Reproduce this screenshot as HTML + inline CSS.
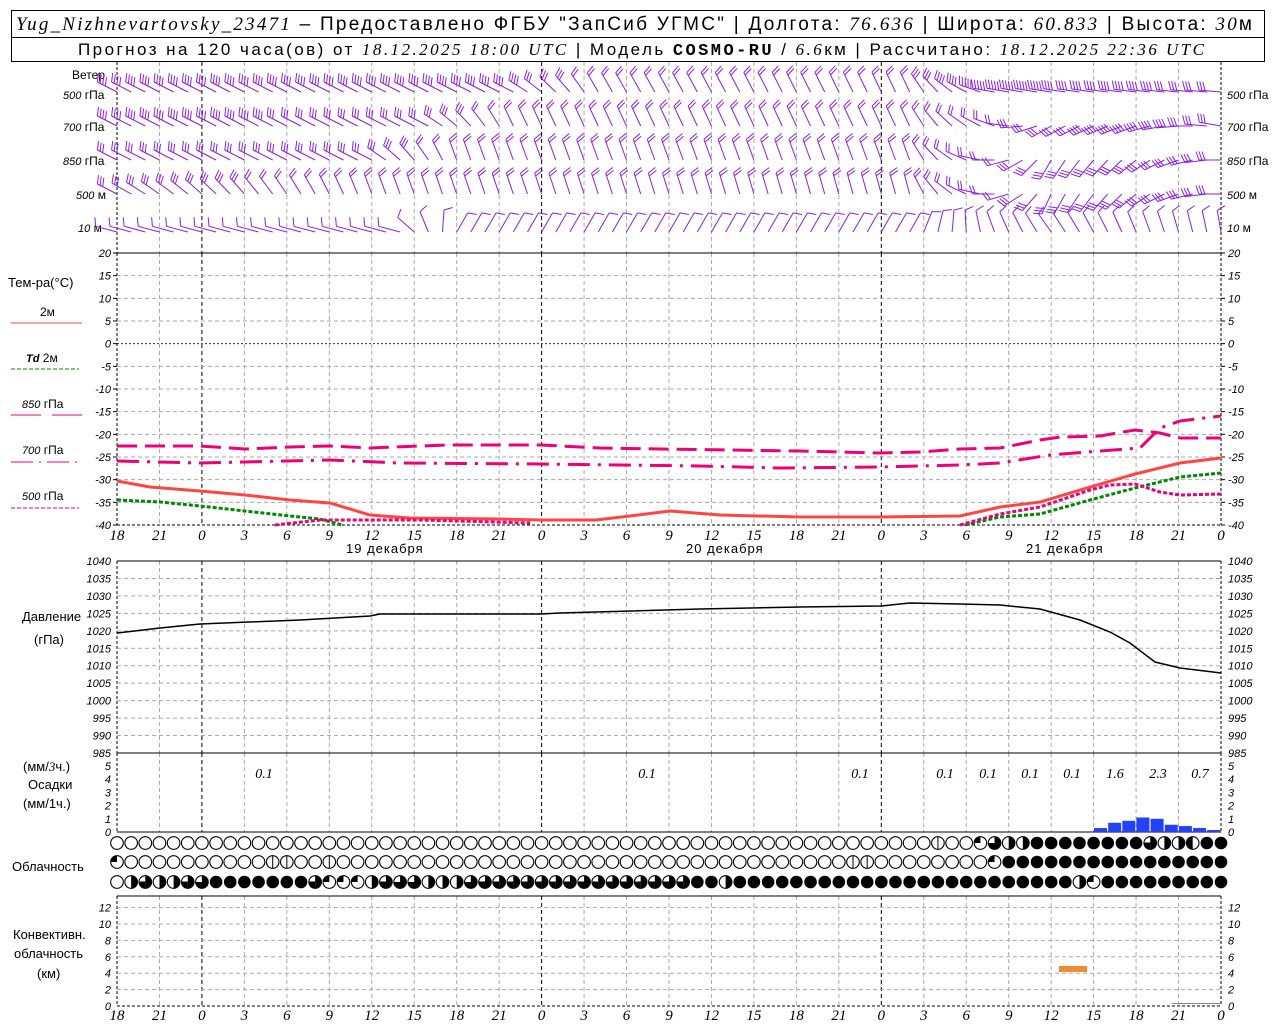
<!DOCTYPE html>
<html><head><meta charset="utf-8"><style>
html,body{margin:0;padding:0;background:#fff;width:1280px;height:1024px;overflow:hidden}
svg{display:block}
text{font-family:"Liberation Sans","DejaVu Sans",sans-serif;fill:#000}
.i{font-family:"Liberation Serif",serif;font-style:italic}
.t{font-size:11px;font-style:italic;font-family:"Liberation Sans",sans-serif}
</style></head><body>
<svg id="s" width="1280" height="1024" xmlns="http://www.w3.org/2000/svg">
<rect x="11.5" y="10.5" width="1253" height="51" fill="none" stroke="#000"/>
<line x1="11" y1="37.5" x2="1265" y2="37.5" stroke="#000"/>
<text x="16" y="30" font-size="19" textLength="1236" lengthAdjust="spacing"><tspan class="i">Yug_Nizhnevartovsky_23471</tspan> – Предоставлено ФГБУ "ЗапСиб УГМС" | Долгота: <tspan class="i">76.636</tspan> | Широта: <tspan class="i">60.833</tspan> | Высота: <tspan class="i">30</tspan>м</text>
<text x="78" y="55" font-size="17" textLength="1126" lengthAdjust="spacing">Прогноз на 120 часа(ов) от <tspan class="i">18.12.2025 18:00 UTC</tspan> | Модель <tspan font-family="Liberation Mono" font-weight="bold">COSMO-RU</tspan> / <tspan class="i">6.6</tspan>км | Рассчитано: <tspan class="i">18.12.2025 22:36 UTC</tspan></text>
<g font-size="12">
<text x="72" y="79">Ветер</text>
<text x="63" y="99"><tspan class="t">500</tspan> гПа</text>
<text x="63" y="131"><tspan class="t">700</tspan> гПа</text>
<text x="63" y="165"><tspan class="t">850</tspan> гПа</text>
<text x="76" y="199"><tspan class="t">500</tspan> м</text>
<text x="78" y="232"><tspan class="t">10</tspan>  м</text>
<text x="1227" y="99"><tspan class="t">500</tspan> гПа</text>
<text x="1227" y="131"><tspan class="t">700</tspan> гПа</text>
<text x="1227" y="165"><tspan class="t">850</tspan> гПа</text>
<text x="1227" y="199"><tspan class="t">500</tspan> м</text>
<text x="1227" y="232"><tspan class="t">10</tspan>  м</text>
<text x="8" y="287" font-size="13">Тем-ра(°C)</text>
<text x="40" y="316">2м</text>
<line x1="11" y1="323" x2="82" y2="323" stroke="#f44" />
<text x="26" y="362"><tspan class="t" font-weight="bold">Td</tspan>  2м</text>
<line x1="11" y1="369" x2="79" y2="369" stroke="#080" stroke-dasharray="4,2"/>
<text x="22" y="408"><tspan class="t">850</tspan> гПа</text>
<line x1="11" y1="415" x2="41" y2="415" stroke="#e07"/><line x1="52" y1="415" x2="82" y2="415" stroke="#e07"/>
<text x="22" y="454"><tspan class="t">700</tspan> гПа</text>
<line x1="11" y1="462" x2="79" y2="462" stroke="#e07" stroke-dasharray="22,6,2,6"/>
<text x="22" y="500"><tspan class="t">500</tspan> гПа</text>
<line x1="11" y1="508" x2="79" y2="508" stroke="#e07" stroke-dasharray="4,2"/>
<text x="22" y="621" font-size="13">Давление</text>
<text x="34" y="644" font-size="13">(гПа)</text>
<text x="23" y="771" font-size="13">(мм/<tspan class="i">3</tspan>ч.)</text>
<text x="28" y="789" font-size="13">Осадки</text>
<text x="23" y="808" font-size="13">(мм/1ч.)</text>
<text x="12" y="871" font-size="13">Облачность</text>
<text x="13" y="939" font-size="13">Конвективн.</text>
<text x="14" y="958" font-size="13">облачность</text>
<text x="37" y="978" font-size="13">(км)</text>
<text x="346" y="553" font-size="13" letter-spacing="1">19 декабря</text>
<text x="686" y="553" font-size="13" letter-spacing="1">20 декабря</text>
<text x="1026" y="553" font-size="13" letter-spacing="1">21 декабря</text>
</g>
<g id="g"></g>
</svg>
<script>
var g=document.getElementById('g'),h='';
var X0=117,X1=1221,dx=(X1-X0)/26,ph=(X1-X0)/78;
function L(a,b,c,d,st,w,da){h+='<line x1="'+a+'" y1="'+b+'" x2="'+c+'" y2="'+d+'" stroke="'+st+'" stroke-width="'+(w||1)+'"'+(da?' stroke-dasharray="'+da+'"':'')+'/>';}
function T(x,y,s,cls,anc){h+='<text x="'+x+'" y="'+y+'" class="'+(cls||'t')+'"'+(anc?' text-anchor="'+anc+'"':'')+'>'+s+'</text>';}
function P(pts,st,w,da){h+='<polyline fill="none" points="'+pts.join(' ')+'" stroke="'+st+'" stroke-width="'+w+'"'+(da?' stroke-dasharray="'+da+'"':'')+'/>';}
var panels=[[62,253],[253,525],[561,753],[753,832],[896,1006]];
panels.forEach(function(p,k){
 for(var i=1;i<26;i++){var x=X0+i*dx;var day=(i==2||i==10||i==18);L(x,p[0],x,p[1],day?'#000':'#aaa',1,'4,3');}
 L(X0,p[0],X0,p[1],'#000',1,'3,2');L(X1,p[0],X1,p[1],'#000',1,'3,2');
});
L(X0,253,X1,253,'#000',1);L(X0,561,X1,561,'#000',1);L(X0,753,X1,753,'#000',1);L(X0,832,X1,832,'#000',1);L(X0,896,X1,896,'#000',1);
for(var v=20;v>=-40;v-=5){var y=253+(20-v)*272/60;if(v<20&&v>-40)L(X0,y,X1,y,v==0?'#22f':'#aaa',1,v==0?'2,2':'4,3');T(111,y+4,v,'t','end');T(1228,y+4,v);L(113,y,117,y,'#000');L(1221,y,1225,y,'#000');}
L(X0,525,X1,525,'#000',1,'3,2');
for(var v=1040;v>=985;v-=5){var y=561+(1040-v)*192/55;if(v<1040&&v>985)L(X0,y,X1,y,'#aaa',1,'4,3');T(111,y+4,v,'t','end');T(1228,y+4,v);}
for(var v=0;v<=5;v++){var y=832-v*13.2;T(111,y+4,v,'t','end');T(1228,y+4,v);}
for(var v=0;v<=12;v+=2){var y=1006-v*8.2;if(v>0)L(X0,y,X1,y,'#aaa',1,'4,3');T(111,y+4,v,'t','end');T(1228,y+4,v);}
L(X0,1006,X1,1006,'#000',1,'3,2');
var lab=[18,21,0,3,6,9,12,15,18,21,0,3,6,9,12,15,18,21,0,3,6,9,12,15,18,21,0];
lab.forEach(function(s,i){var x=X0+i*dx;h+='<text x="'+x+'" y="540" text-anchor="middle" class="i" font-size="15">'+s+'</text><text x="'+x+'" y="1020" text-anchor="middle" class="i" font-size="15">'+s+'</text>';});
P(['117,481','150,487','200,491','245,495','290,500','330,503','370,515','410,518','500,519','541,520','596,520','630,516','670,511','720,515','800,517','881,517','960,516','1000,507','1040,502','1090,487','1135,474','1180,463','1221,458'],'#f44',3);
P(['117,500','160,502','200,506','245,511','290,516','320,519','342,525'],'#080',3,'4,2');
P(['965,525','1000,517','1040,514','1090,500','1135,488','1180,477','1221,473'],'#080',3,'4,2');
P(['117,446','200,446','245,449','290,447','330,446','370,448','420,446','450,445','541,445','600,448','660,449','800,451','880,453','920,452','960,449','1000,448','1040,440','1060,437','1100,436','1135,430','1160,433','1180,438','1221,438'],'#e07',3,'20,8');
P(['117,461','200,463','330,460','400,463','541,464','700,466','780,468','880,467','960,465','1000,463','1050,455','1100,451','1140,448','1160,428','1180,421','1221,416'],'#e07',3,'22,8,3,8');
P(['275,525','320,520','420,520','530,523'],'#e07',3,'4,2');
P(['960,525','1000,514','1040,507','1090,490','1110,485','1135,484','1160,492','1180,495','1221,494'],'#e07',3,'4,2');
P(['117,633','160,628','200,624','300,620','370,616','380,614','541,614','560,613','700,609','800,607','881,606','910,603','960,604','1000,605','1040,609','1080,620','1110,632','1130,643','1155,662','1180,668','1221,673'],'#000',1.5);
[[264,'0.1'],[647,'0.1'],[860,'0.1'],[945,'0.1'],[988,'0.1'],[1030,'0.1'],[1072,'0.1'],[1115,'1.6'],[1158,'2.3'],[1200,'0.7']].forEach(function(a){h+='<text x="'+a[0]+'" y="778" text-anchor="middle" class="i" font-size="14">'+a[1]+'</text>';});
[0.3,0.7,0.85,1.1,1.0,0.55,0.45,0.3,0.15].forEach(function(v,i){var x=1094+i*14.15;h+='<rect x="'+x+'" y="'+(832-v*13.2)+'" width="13" height="'+(v*13.2)+'" fill="#2442f5"/>';});
h+='<rect x="1172" y="1003" width="50" height="1" fill="#888"/>';
h+='<rect x="1059" y="966" width="28" height="6" fill="#f08c30"/>';
function rowArr(def,sp){var a=[];for(var i=0;i<79;i++)a.push(def);for(var k in sp)a[k]=sp[k];return a;}
var r1=rowArr('o',{58:'v',61:'q',62:'3',63:'R',64:'R',73:'h',74:'R',75:'R',76:'L'});for(var i=65;i<79;i++)if(!r1[i]||r1[i]=='o')r1[i]='f';
var r2=rowArr('o',{0:'q',11:'v',12:'v',15:'v',52:'v',53:'v',62:'q'});for(var i=63;i<79;i++)r2[i]='f';
var r3=rowArr('h',{0:'o',1:'R',2:'h',3:'R',4:'R',5:'h',6:'3',14:'h',15:'q',16:'q',17:'q',18:'R',19:'h',20:'3',21:'3',22:'R',23:'R',24:'R',25:'3'});
for(var i=7;i<14;i++)r3[i]='f';for(var i=41;i<79;i++)r3[i]='f';r3[43]='R';r3[68]='R';r3[69]='q';
function circ(cx,cy,t){var r=6.3;
 if(t=='f'){h+='<circle cx="'+cx+'" cy="'+cy+'" r="'+r+'" fill="#000"/>';return;}
 h+='<circle cx="'+cx+'" cy="'+cy+'" r="'+r+'" fill="#fff" stroke="#000" stroke-width="1.1"/>';
 if(t=='v')L(cx,cy-r,cx,cy+r,'#000');
 if(t=='R'||t=='h')h+='<path d="M'+cx+' '+(cy-r)+'A'+r+' '+r+' 0 0 1 '+cx+' '+(cy+r)+'Z" fill="#000"/>';
 if(t=='L')h+='<path d="M'+cx+' '+(cy-r)+'A'+r+' '+r+' 0 0 0 '+cx+' '+(cy+r)+'Z" fill="#000"/>';
 if(t=='h'){L(cx-r,cy,cx,cy,'#000');h+='<path d="M'+cx+' '+cy+'L'+(cx-r)+' '+cy+'A'+r+' '+r+' 0 0 0 '+cx+' '+(cy+r)+'Z" fill="#000"/>';}
 if(t=='q')h+='<path d="M'+cx+' '+cy+'L'+cx+' '+(cy-r)+'A'+r+' '+r+' 0 0 0 '+(cx-r)+' '+cy+'Z" fill="#000"/>';
 if(t=='3')h+='<path d="M'+cx+' '+cy+'L'+cx+' '+(cy-r)+'A'+r+' '+r+' 0 1 1 '+(cx-r)+' '+cy+'Z" fill="#000"/>';
}
[[r1,843],[r2,862],[r3,882]].forEach(function(rw){for(var i=0;i<79;i++)circ(X0+i*ph,rw[1],rw[0][i]);});
var lv=[[92,[[0,207,4],[28,207,4],[34,240,2],[56,245,2],[62,190,5],[78,185,3]]],
[126,[[0,207,4],[22,207,3],[28,245,2],[56,245,2],[62,200,2],[66,150,3],[72,160,4],[78,190,3]]],
[160,[[0,207,3],[18,207,3],[24,250,2],[56,250,2],[62,180,2],[66,120,3],[72,140,3],[78,180,3]]],
[194,[[0,207,3],[18,250,2],[56,255,2],[62,180,2],[66,115,3],[72,140,3],[78,180,3]]],
[232,[[0,195,1],[20,195,1],[24,300,1],[56,300,1],[62,250,1],[66,235,1],[78,260,1]]]];
var ws='';
lv.forEach(function(l){var y0=l[0],k=l[1];
 for(var i=0;i<79;i++){var j=0;while(j<k.length-2&&k[j+1][0]<=i)j++;var A=k[j],B=k[j+1];var f=Math.min(1,Math.max(0,(i-A[0])/(B[0]-A[0])));
  var a=(A[1]+(B[1]-A[1])*f)*Math.PI/180,n=Math.round(A[2]+(B[2]-A[2])*f);
  var x=X0+i*ph,Ls=22,ex=x+Math.cos(a)*Ls,ey=y0+Math.sin(a)*Ls;
  ws+='M'+x.toFixed(1)+' '+y0+'L'+ex.toFixed(1)+' '+ey.toFixed(1);
  var b=a+70*Math.PI/180;
  for(var m=0;m<n;m++){var px=ex-Math.cos(a)*m*3,py=ey-Math.sin(a)*m*3;ws+='M'+px.toFixed(1)+' '+py.toFixed(1)+'l'+(Math.cos(b)*9).toFixed(1)+' '+(Math.sin(b)*9).toFixed(1);}
 }});
h+='<path d="'+ws+'" fill="none" stroke="#8a1ee8" stroke-width="1"/>';
g.innerHTML=h;
</script>
</body></html>
